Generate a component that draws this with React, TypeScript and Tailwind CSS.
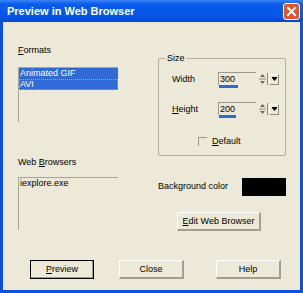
function Spinner() {
  return (
    <div className="flex items-center ml-[2px] h-[14px]">
      <svg width="10" height="12" viewBox="0 0 10 12">
        <path d="M4.5 1 L2 4 H7 Z" fill="#6b6a60" />
        <path d="M1 6 H8" stroke="#8d8b80" strokeWidth="1" />
        <path d="M2 8 H7 L4.5 11 Z" fill="#6b6a60" />
        <path d="M9.5 0 V12" stroke="#8d8b80" strokeWidth="1" />
      </svg>
      <div className="w-[10px] h-[11px] ml-[1px] flex items-center justify-center border-t border-l border-white border-r border-b border-r-[#8d8b80] border-b-[#8d8b80]">
        <svg width="5" height="4" viewBox="0 0 5 4">
          <path d="M0 0 H5 V1 L2.5 4 L0 1 Z" fill="#000" />
        </svg>
      </div>
    </div>
  )
}

function NumberField({ value, bar }: { value: string; bar: string }) {
  return (
    <div className="flex items-start">
      <div className="flex flex-col w-[38px]">
        <div className="h-[13px] border-t border-l border-[#9a988c] pl-[1px] leading-[12px]">{value}</div>
        <div className={`h-[3px] ml-[1px] bg-[#2b6ad8] ${bar}`} />
      </div>
      <Spinner />
    </div>
  )
}

function Btn({ children, def, w }: { children: React.ReactNode; def?: boolean; w: string }) {
  return (
    <div
      className={`${w} h-[19px] flex items-center justify-center leading-none ${
        def
          ? "border border-black shadow-[inset_-1px_-1px_0_#9d9a8c]"
          : "border-t border-l border-white border-r-2 border-b-2 border-r-[#a19e90] border-b-[#a19e90]"
      }`}
    >
      {children}
    </div>
  )
}

export default function App() {
  return (
    <div className="w-[303px] h-[293px] flex flex-col bg-[#0a50e0] font-['Liberation_Sans',Arial,sans-serif] text-[9px] text-black">
      <div className="h-[22px] flex items-center pl-[7px] pr-[3px] bg-[linear-gradient(to_bottom,#3c86f5_0%,#0a5ced_18%,#0556e6_75%,#0348cf_100%)]">
        <span className="flex-1 text-white font-bold text-[11px] leading-none">Preview in Web Browser</span>
        <div className="w-[17px] h-[17px] rounded-[3px] border border-white bg-[#dd5630] flex items-center justify-center">
          <svg width="11" height="11" viewBox="0 0 11 11">
            <path d="M2 2 L9 9 M9 2 L2 9" stroke="#fff" strokeWidth="2" strokeLinecap="square" />
          </svg>
        </div>
      </div>

      <div className="flex-1 mx-[3px] mb-[3px] bg-[#ece9d8] flex flex-col">
        <div className="flex pl-[15px]">
          <div className="w-[100px] pt-[22px] flex flex-col">
            <div className="h-[13px] leading-[13px]">
              <span className="underline">F</span>ormats
            </div>
            <div className="mt-[10px] h-[55px] border-t border-l border-[#a7a59a] flex flex-col">
              <div className="h-[11px] leading-[11px] bg-[#2f6ad6] text-white pl-[1px]">Animated GIF</div>
              <div className="h-[11px] leading-[9px] bg-[#2f6ad6] text-white border border-dotted border-[#e0a23c]">AVI</div>
            </div>
            <div className="mt-[34px] h-[13px] leading-[13px]">
              Web <span className="underline">B</span>rowsers
            </div>
            <div className="mt-[8px] h-[53px] border-t border-l border-[#a7a59a]">
              <div className="h-[11px] leading-[11px] pl-[1px]">iexplore.exe</div>
            </div>
          </div>

          <div className="ml-[40px] w-[128px] pt-[36px] flex flex-col">
            <div className="h-[98px] border border-[#b0ae9f] rounded-[2px] flex flex-col">
              <span className="w-fit ml-[6px] px-[2px] -mt-[7px] h-[13px] leading-[13px] bg-[#ece9d8]">Size</span>
              <div className="mt-[7px] flex items-start">
                <span className="w-[59px] pl-[13px] leading-[14px]">Width</span>
                <NumberField value="300" bar="w-[19px]" />
              </div>
              <div className="mt-[14px] flex items-start">
                <span className="w-[59px] pl-[13px] leading-[14px]">
                  <span className="underline">H</span>eight
                </span>
                <NumberField value="200" bar="w-[17px]" />
              </div>
              <div className="mt-[18px] flex items-center pl-[39px]">
                <div className="w-[9px] h-[9px] border-t border-l border-[#9a988c]" />
                <span className="ml-[5px] leading-[11px]">
                  <span className="underline">D</span>efault
                </span>
              </div>
            </div>

            <div className="mt-[22px] flex items-center justify-between">
              <span>Background color</span>
              <div className="w-[44px] h-[18px] bg-black" />
            </div>

            <div className="mt-[16px] ml-[19px]">
              <Btn w="w-[84px]">
                <span>
                  <span className="underline">E</span>dit Web Browser
                </span>
              </Btn>
            </div>
          </div>
        </div>

        <div className="mt-[29px] flex pl-[27px]">
          <Btn def w="w-[64px]">
            <span>
              <span className="underline">P</span>review
            </span>
          </Btn>
          <div className="ml-[25px]">
            <Btn w="w-[65px]">Close</Btn>
          </div>
          <div className="ml-[32px]">
            <Btn w="w-[65px]">Help</Btn>
          </div>
        </div>
      </div>
    </div>
  )
}
